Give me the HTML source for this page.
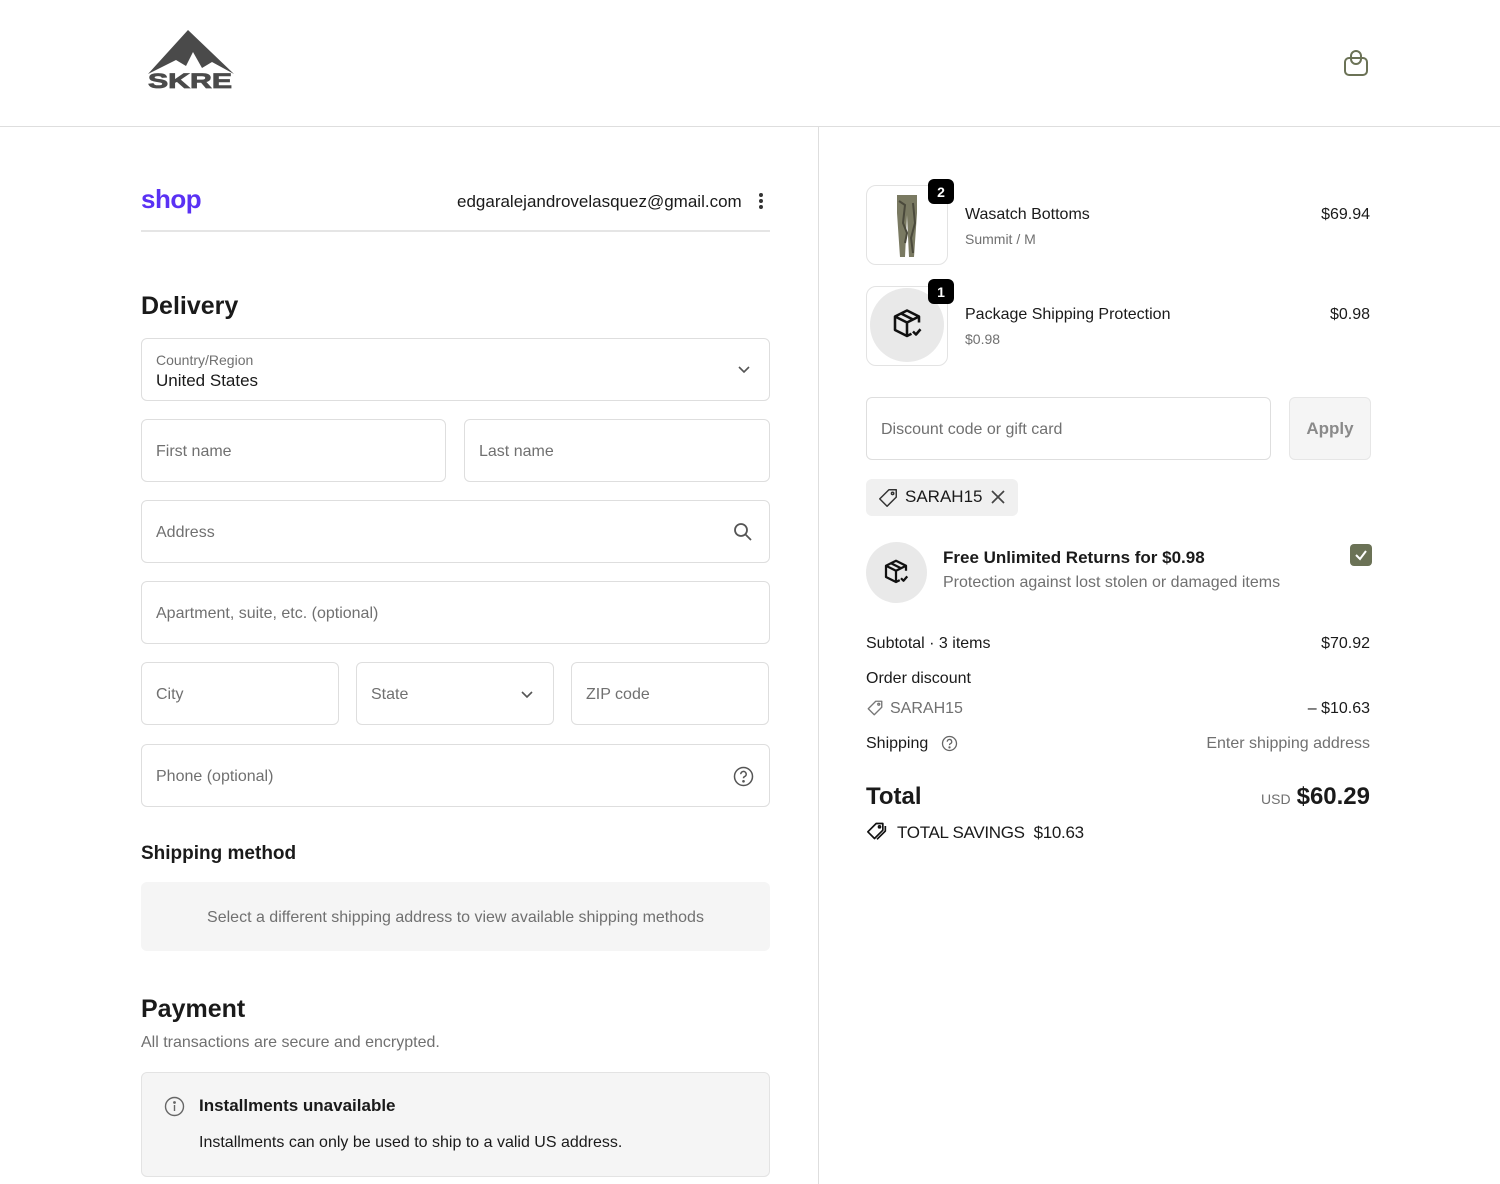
<!DOCTYPE html>
<html><head><meta charset="utf-8">
<style>
*{box-sizing:border-box;margin:0;padding:0}
body{width:1500px;height:1184px;background:#fff;font-family:"Liberation Sans",sans-serif;color:#1a1a1a;position:relative;overflow:hidden}
.a{position:absolute}
.f{position:absolute;border:1px solid #dedede;border-radius:6px;background:#fff;font-size:16px;color:#707070;padding-left:14px;padding-top:3px;display:flex;align-items:center;height:63px}
.g{color:#707070}
.r{position:absolute;font-size:16px}
</style></head><body>
<!-- header -->
<svg class="a" style="left:146px;top:28px" width="92" height="64" viewBox="0 0 92 64">
<path d="M2 46 L42 2 L88 46 L66 34 L56 40 L47 24 L40 38 L30 32 Z" fill="#4a4a4a"/>
<text x="2" y="60" font-family="Liberation Sans" font-weight="bold" font-size="21" fill="#4a4a4a" textLength="84" lengthAdjust="spacingAndGlyphs" stroke="#4a4a4a" stroke-width="0.8">SKRE</text>
</svg>
<svg class="a" style="left:1342px;top:48px" width="28" height="30" viewBox="0 0 28 30" fill="none" stroke="#6b7256" stroke-width="2">
<rect x="3" y="10" width="22" height="17" rx="4"/><rect x="9" y="3" width="10" height="13" rx="5"/>
</svg>
<div class="a" style="left:0;top:126px;width:1500px;height:1px;background:#dedede"></div>
<div class="a" style="left:818px;top:127px;width:1px;height:1057px;background:#dedede"></div>

<!-- left -->
<div class="a" style="left:141px;top:184px;font-size:26px;font-weight:bold;color:#5a31f4;letter-spacing:-0.5px">shop</div>
<div class="a" style="left:457px;top:192px;font-size:17px;color:#1a1a1a">edgaralejandrovelasquez@gmail.com</div>
<div class="a" style="left:759px;top:193px;width:4px;height:4px;border-radius:2px;background:#333;box-shadow:0 6px 0 #333,0 12px 0 #333"></div>
<div class="a" style="left:141px;top:230px;width:629px;height:2px;background:#e5e5e5"></div>

<div class="a" style="left:141px;top:292px;font-size:25px;font-weight:bold">Delivery</div>
<div class="f" style="left:141px;top:338px;width:629px;flex-direction:column;align-items:flex-start;justify-content:center">
<div style="font-size:14px;color:#707070">Country/Region</div><div style="font-size:17px;color:#1a1a1a;margin-top:3px">United States</div></div>
<svg class="a" style="left:737px;top:365px" width="14" height="10"><path d="M2 2 L7 7 L12 2" stroke="#555" stroke-width="1.6" fill="none"/></svg>

<div class="f" style="left:141px;top:419px;width:305px">First name</div>
<div class="f" style="left:464px;top:419px;width:306px">Last name</div>
<div class="f" style="left:141px;top:500px;width:629px">Address</div>
<svg class="a" style="left:733px;top:522px" width="20" height="20" fill="none" stroke="#555" stroke-width="1.8"><circle cx="8" cy="8" r="6"/><path d="M12.5 12.5 L18 18"/></svg>
<div class="f" style="left:141px;top:581px;width:629px">Apartment, suite, etc. (optional)</div>
<div class="f" style="left:141px;top:662px;width:198px">City</div>
<div class="f" style="left:356px;top:662px;width:198px">State</div>
<svg class="a" style="left:520px;top:690px" width="14" height="10"><path d="M2 2 L7 7 L12 2" stroke="#555" stroke-width="1.6" fill="none"/></svg>
<div class="f" style="left:571px;top:662px;width:198px">ZIP code</div>
<div class="f" style="left:141px;top:744px;width:629px">Phone (optional)</div>
<svg class="a" style="left:733px;top:766px" width="21" height="21" fill="none" stroke="#555" stroke-width="1.5"><circle cx="10.5" cy="10.5" r="9"/><path d="M7.8 8.2a2.7 2.7 0 1 1 3.8 2.4c-.8.4-1.1.9-1.1 1.7"/><circle cx="10.5" cy="15.3" r=".6" fill="#555"/></svg>

<div class="a" style="left:141px;top:843px;font-size:19px;font-weight:bold">Shipping method</div>
<div class="a" style="left:141px;top:882px;width:629px;height:69px;background:#f5f5f5;border-radius:6px;display:flex;align-items:center;justify-content:center;font-size:16px;color:#707070;padding-top:2px">Select a different shipping address to view available shipping methods</div>

<div class="a" style="left:141px;top:995px;font-size:25px;font-weight:bold">Payment</div>
<div class="a" style="left:141px;top:1034px;font-size:16px;color:#707070">All transactions are secure and encrypted.</div>
<div class="a" style="left:141px;top:1072px;width:629px;height:105px;background:#f5f5f5;border:1px solid #e3e3e3;border-radius:6px"></div>
<svg class="a" style="left:164px;top:1096px" width="21" height="21" fill="none" stroke="#666" stroke-width="1.4"><circle cx="10.5" cy="10.5" r="9"/><path d="M10.5 9v6"/><circle cx="10.5" cy="6.5" r=".7" fill="#666"/></svg>
<div class="a" style="left:199px;top:1096px;font-size:17px;font-weight:bold">Installments unavailable</div>
<div class="a" style="left:199px;top:1134px;font-size:16px">Installments can only be used to ship to a valid US address.</div>

<!-- right -->
<div class="a" style="left:866px;top:185px;width:82px;height:80px;border:1px solid #e3e3e3;border-radius:10px;background:#fff"></div>
<svg class="a" style="left:893px;top:193px" width="28" height="66" viewBox="0 0 28 66"><path d="M4 2 L24 2 L24 20 L21 64 L16 64 L14 22 L12 64 L7 64 L4 20 Z" fill="#7a7a62"/><path d="M6 8 L12 12 L10 30 L14 40 L12 50 M20 10 L22 30 L18 45 L20 60" stroke="#4b4a3c" stroke-width="2" fill="none"/></svg>
<div class="a" style="left:928px;top:179px;width:26px;height:25px;border-radius:6px;background:#000;color:#fff;font-size:14px;font-weight:bold;display:flex;align-items:center;justify-content:center">2</div>
<div class="r" style="left:965px;top:206px">Wasatch Bottoms</div>
<div class="a g" style="left:965px;top:231px;font-size:14px">Summit / M</div>
<div class="r" style="right:130px;top:206px">$69.94</div>

<div class="a" style="left:866px;top:286px;width:82px;height:80px;border:1px solid #e3e3e3;border-radius:10px;background:#fff"></div>
<div class="a" style="left:870px;top:288px;width:74px;height:74px;border-radius:37px;background:#e9e9e9"></div>
<svg class="a" style="left:889px;top:306px" width="36" height="36" viewBox="0 0 24 24" fill="none" stroke="#111" stroke-width="1.7" stroke-linejoin="round"><path d="M20 11V7L12 3 4 7v9l8 4 3-1.5"/><path d="M4 7l8 4 8-4M12 11v9M8 5l8 4"/><path d="M16 17l2 2 3-3.5"/></svg>
<div class="a" style="left:928px;top:279px;width:26px;height:25px;border-radius:6px;background:#000;color:#fff;font-size:14px;font-weight:bold;display:flex;align-items:center;justify-content:center">1</div>
<div class="r" style="left:965px;top:306px">Package Shipping Protection</div>
<div class="a g" style="left:965px;top:331px;font-size:14px">$0.98</div>
<div class="r" style="right:130px;top:306px">$0.98</div>

<div class="f" style="left:866px;top:397px;width:405px;height:63px">Discount code or gift card</div>
<div class="a" style="left:1289px;top:397px;width:82px;height:63px;border:1px solid #e6e6e6;border-radius:6px;background:#f5f5f5;display:flex;align-items:center;justify-content:center;font-size:17px;font-weight:bold;color:#8a8a8a">Apply</div>

<div class="a" style="left:866px;top:479px;width:152px;height:37px;background:#f0f0f0;border-radius:6px"></div>
<svg class="a" style="left:877px;top:487px" width="22" height="22" viewBox="0 0 24 24" fill="none" stroke="#333" stroke-width="1.6" stroke-linejoin="round"><path d="M13 3h8v8L11 21 3 13z"/><circle cx="17" cy="7" r="1.3"/></svg>
<div class="a" style="left:905px;top:487px;font-size:17px">SARAH15</div>
<svg class="a" style="left:990px;top:489px" width="16" height="16" stroke="#444" stroke-width="1.7"><path d="M2 2L14 14M14 2L2 14"/></svg>

<div class="a" style="left:866px;top:542px;width:61px;height:61px;border-radius:31px;background:#e9e9e9"></div>
<svg class="a" style="left:881px;top:557px" width="30" height="30" viewBox="0 0 24 24" fill="none" stroke="#111" stroke-width="1.8" stroke-linejoin="round"><path d="M20 11V7L12 3 4 7v9l8 4 3-1.5"/><path d="M4 7l8 4 8-4M12 11v9M8 5l8 4"/><path d="M16 17l2 2 3-3.5"/></svg>
<div class="a" style="left:943px;top:548px;font-size:17px;font-weight:bold">Free Unlimited Returns for $0.98</div>
<div class="a g" style="left:943px;top:574px;font-size:16px">Protection against lost stolen or damaged items</div>
<div class="a" style="left:1350px;top:544px;width:22px;height:22px;border-radius:4px;background:#6b7256"></div>
<svg class="a" style="left:1354px;top:548px" width="14" height="14"><path d="M2 7L6 11L12 3" stroke="#fff" stroke-width="2" fill="none"/></svg>

<div class="r" style="left:866px;top:635px">Subtotal · 3 items</div>
<div class="r" style="right:130px;top:635px">$70.92</div>
<div class="r" style="left:866px;top:670px">Order discount</div>
<svg class="a" style="left:866px;top:699px" width="18" height="18" viewBox="0 0 24 24" fill="none" stroke="#777" stroke-width="1.8" stroke-linejoin="round"><path d="M13 3h8v8L11 21 3 13z"/><circle cx="17" cy="7" r="1.3"/></svg>
<div class="r g" style="left:890px;top:700px">SARAH15</div>
<div class="r" style="right:130px;top:700px">– $10.63</div>
<div class="r" style="left:866px;top:735px">Shipping</div>
<svg class="a" style="left:941px;top:735px" width="17" height="17" fill="none" stroke="#666" stroke-width="1.3"><circle cx="8.5" cy="8.5" r="7"/><path d="M6.3 6.7a2.2 2.2 0 1 1 3 2c-.6.3-.8.7-.8 1.4"/><circle cx="8.5" cy="12.4" r=".5" fill="#666"/></svg>
<div class="r g" style="right:130px;top:735px">Enter shipping address</div>
<div class="a" style="left:866px;top:783px;font-size:24px;font-weight:bold">Total</div>
<div class="a g" style="left:1261px;top:791px;font-size:14px">USD</div>
<div class="a" style="right:130px;top:783px;font-size:24px;font-weight:bold">$60.29</div>
<svg class="a" style="left:866px;top:821px" width="22" height="20" viewBox="0 0 26 24" fill="none" stroke="#111" stroke-width="2" stroke-linejoin="round"><path d="M12 3h8v8L10 21 2 13z"/><path d="M23 6v6L13 22"/><circle cx="16" cy="7" r="1.2"/></svg>
<div class="a" style="left:897px;top:823px;font-size:17px;letter-spacing:-0.3px">TOTAL SAVINGS&nbsp; $10.63</div>
</body></html>
